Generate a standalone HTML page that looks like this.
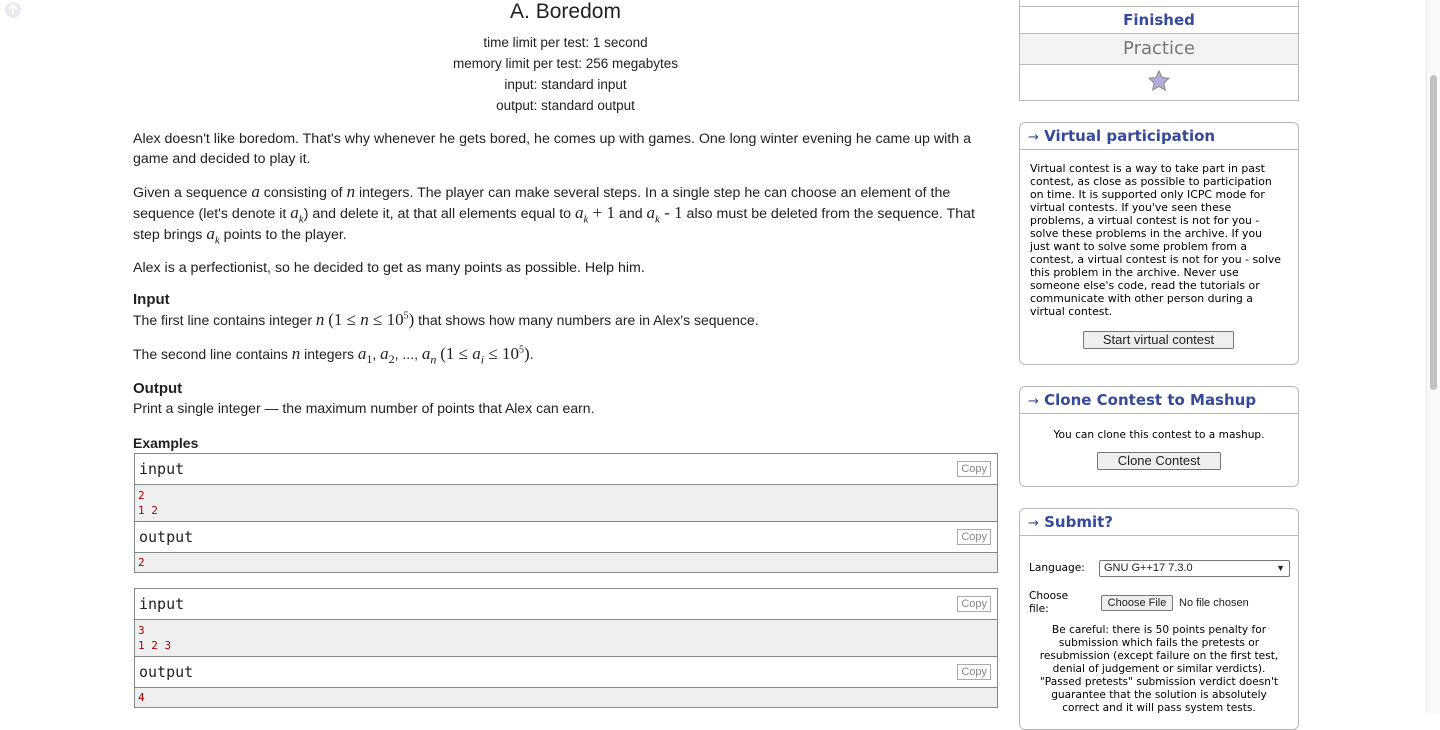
<!DOCTYPE html>
<html><head><style>
body{margin:0;width:1440px;height:713px;overflow:hidden;background:#fff;font-family:"Liberation Sans",Arial,sans-serif;color:#222;position:relative}
.a{position:absolute}
.c{text-align:center}
p{margin:0}
sub,sup{line-height:0}
.t{font-size:14px;line-height:20px}
.m{font-family:"Liberation Serif",serif;font-style:italic;font-size:17px}
.r{font-family:"Liberation Serif",serif;font-size:17px}
.box{position:absolute;left:1019px;width:278px;border:1px solid #b9b9b9;border-radius:6px;background:#fff}
.box h3{margin:0;height:26px;border-bottom:1px solid #b9b9b9;font-family:"DejaVu Sans",Verdana,sans-serif;font-size:15px;color:#36499b;padding-left:8px;line-height:26px;font-weight:bold}
.box h3 span{font-weight:normal;font-size:13px}
.sm{font-family:"DejaVu Sans",Verdana,sans-serif;font-size:10.6px;line-height:13px;color:#000}
.btn{position:absolute;border:1px solid #767676;background:#efefef;font-size:13px;text-align:center;border-radius:2px;line-height:16px}
.ex{position:absolute;left:134px;width:862px;border:1px solid #888}
.ex .h{height:30px;border-bottom:1px solid #888;font-family:"DejaVu Sans Mono",monospace;font-size:15px;line-height:30px;padding-left:4px;position:relative;background:#fff}
.ex .d{background:#efefef;font-family:"DejaVu Sans Mono",monospace;font-size:11px;line-height:15px;color:#a00;padding:3px 3px;border-bottom:1px solid #888}
.ex .d:last-child{border-bottom:0}
.cp{position:absolute;right:6px;top:7px;border:1px solid #aaa;font-family:"Liberation Sans",sans-serif;font-size:11px;line-height:14px;color:#888;padding:0 3px;background:#fff}
</style></head><body>
<svg class="a" style="left:4px;top:1px" width="18" height="18"><circle cx="9" cy="9" r="8" fill="#e8eaf0"/><path d="M9 4v9M5 8l4-4 4 4" stroke="#fff" stroke-width="2" fill="none"/></svg>
<div class="a c" style="left:133px;width:865px;top:0;font-size:21px;line-height:24px">A. Boredom</div>
<div class="a c t" style="left:133px;width:865px;top:32px;font-size:13.5px;line-height:21px">time limit per test: 1 second<br>memory limit per test: 256 megabytes<br>input: standard input<br>output: standard output</div>
<div class="a t" style="left:133px;top:129px;width:850px;font-size:14.2px">
<p>Alex doesn't like boredom. That's why whenever he gets bored, he comes up with games. One long winter evening he came up with a game and decided to play it.</p>
<p style="margin-top:13px">Given a sequence <span class="m">a</span> consisting of <span class="m">n</span> integers. The player can make several steps. In a single step he can choose an element of the sequence (let's denote it <span class="m">a<sub style="font-size:11px">k</sub></span>) and delete it, at that all elements equal to <span class="m">a<sub style="font-size:11px">k</sub></span><span class="r"> + 1</span> and <span class="m">a<sub style="font-size:11px">k</sub></span><span class="r"> - 1</span> also must be deleted from the sequence. That step brings <span class="m">a<sub style="font-size:11px">k</sub></span> points to the player.</p>
<p style="margin-top:13px">Alex is a perfectionist, so he decided to get as many points as possible. Help him.</p>
</div>
<div class="a" style="left:133px;top:291px;font-size:15px;font-weight:bold">Input</div>
<div class="a t" style="left:133px;top:310px">The first line contains integer <span class="m">n</span> <span class="r">(1 ≤ <i>n</i> ≤ 10<sup style="font-size:10px">5</sup>)</span> that shows how many numbers are in Alex's sequence.</div>
<div class="a t" style="left:133px;top:344px">The second line contains <span class="m">n</span> integers <span class="m">a</span><sub class="r" style="font-size:12px">1</sub>, <span class="m">a</span><sub class="r" style="font-size:12px">2</sub>, ..., <span class="m">a<sub style="font-size:12px">n</sub></span> <span class="r">(1 ≤ <i>a<sub style="font-size:12px">i</sub></i> ≤ 10<sup style="font-size:10px">5</sup>)</span>.</div>
<div class="a" style="left:133px;top:380px;font-size:15px;font-weight:bold">Output</div>
<div class="a t" style="left:133px;top:398px">Print a single integer — the maximum number of points that Alex can earn.</div>
<div class="a" style="left:133px;top:435px;font-size:14px;font-weight:bold">Examples</div>
<div class="ex" style="top:453px"><div class="h">input<span class="cp">Copy</span></div><div class="d">2<br>1 2</div><div class="h">output<span class="cp">Copy</span></div><div class="d" style="padding:2px 3px">2</div></div>
<div class="ex" style="top:588px"><div class="h">input<span class="cp">Copy</span></div><div class="d">3<br>1 2 3</div><div class="h">output<span class="cp">Copy</span></div><div class="d" style="padding:2px 3px">4</div></div>

<div class="a" style="left:1019px;top:-2px;width:278px;height:101px;border:1px solid #b9b9b9">
<div style="height:7px;border-bottom:1px solid #b9b9b9"></div>
<div class="c" style="height:26px;line-height:27px;border-bottom:1px solid #b9b9b9;font-weight:bold;color:#36499b;font-size:15px;font-family:'DejaVu Sans',sans-serif">Finished</div>
<div class="c" style="height:30px;line-height:30px;border-bottom:1px solid #b9b9b9;background:#f3f3f3;color:#777;font-size:18px;font-family:'DejaVu Sans',sans-serif">Practice</div>
<svg style="display:block;margin:4px auto 0" width="24" height="24" viewBox="0 0 24 24"><path d="M12 2l3 6.5 7 .8-5.2 4.8 1.5 7L12 17.5 5.7 21l1.5-7L2 9.3l7-.8z" fill="#b0b0dd" stroke="#888" stroke-width="1"/></svg>
</div>

<div class="box" style="top:122px;height:241px"><h3><span>→</span> Virtual participation</h3>
<div class="sm" style="padding:12px 14px 0 10px;font-size:10.9px">Virtual contest is a way to take part in past contest, as close as possible to participation on time. It is supported only ICPC mode for virtual contests. If you've seen these problems, a virtual contest is not for you - solve these problems in the archive. If you just want to solve some problem from a contest, a virtual contest is not for you - solve this problem in the archive. Never use someone else's code, read the tutorials or communicate with other person during a virtual contest.</div>
<div class="btn" style="left:63px;top:208px;width:149px">Start virtual contest</div></div>

<div class="box" style="top:386px;height:99px"><h3><span>→</span> Clone Contest to Mashup</h3>
<div class="sm c" style="padding-top:15px">You can clone this contest to a mashup.</div>
<div class="btn" style="left:77px;top:65px;width:122px">Clone Contest</div></div>

<div class="box" style="top:508px;height:220px"><h3><span>→</span> Submit?</h3>
<div class="a sm" style="left:9px;top:53px">Language:</div>
<div class="a" style="left:79px;top:51px;width:185px;height:15px;border:1px solid #767676;border-radius:2px;font-size:11px;line-height:15px;padding-left:4px">GNU G++17 7.3.0<span style="position:absolute;right:4px;font-size:9px">&#9660;</span></div>
<div class="a sm" style="left:9px;top:81px">Choose<br>file:</div>
<div class="btn" style="left:81px;top:86px;width:70px;font-size:11px;line-height:14px">Choose File</div>
<div class="a" style="left:159px;top:88px;font-size:11px">No file chosen</div>
<div class="a sm c" style="left:12px;width:254px;top:115px">Be careful: there is 50 points penalty for submission which fails the pretests or resubmission (except failure on the first test, denial of judgement or similar verdicts). "Passed pretests" submission verdict doesn't guarantee that the solution is absolutely correct and it will pass system tests.</div></div>

<div class="a" style="left:1426px;top:0;width:14px;height:713px;background:#fafafa;border-left:1px solid #e8e8e8"></div>
<div class="a" style="left:1430px;top:75px;width:7px;height:315px;background:#c1c1c1;border-radius:4px"></div>
</body></html>
